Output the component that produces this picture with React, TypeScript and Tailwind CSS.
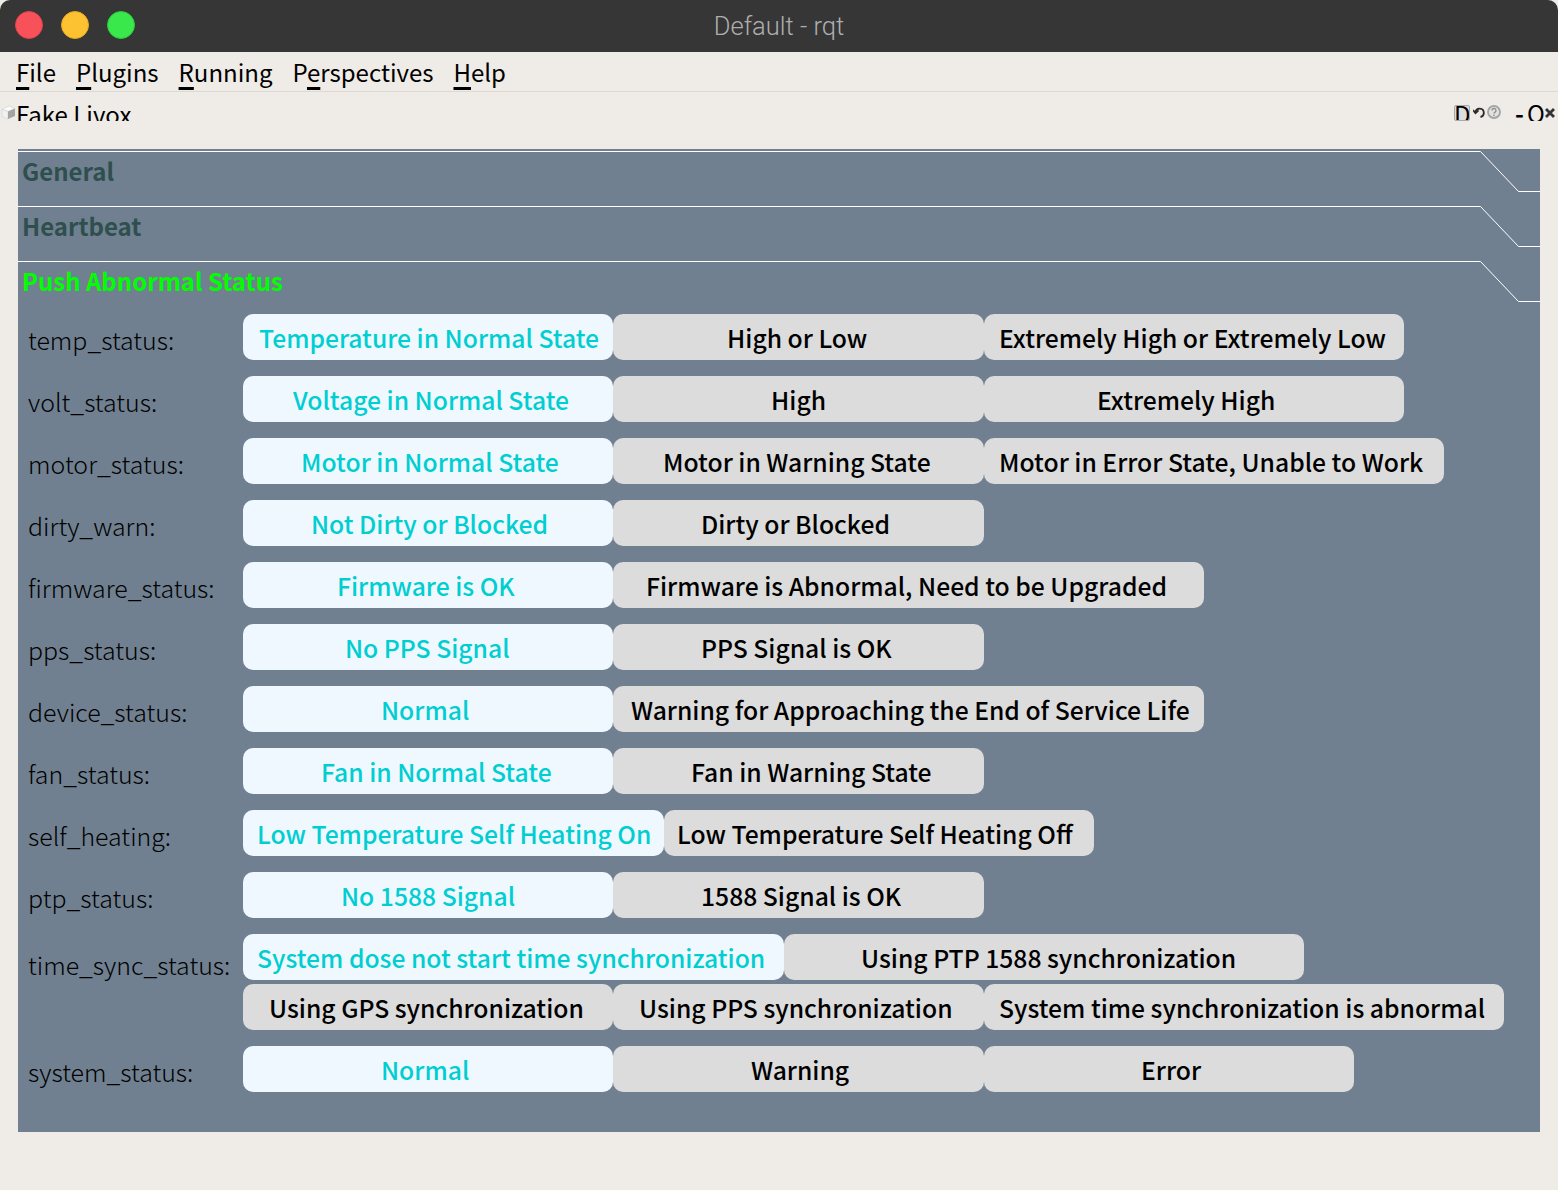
const FONT = "font-['Noto_Sans_CJK_SC','Noto_Sans',sans-serif]";

type Btn = { text: string; w: string; pl: string; on?: boolean };
type Row = { label: string; labelPt?: string; lines: Btn[][] };

const rows: Row[] = [
  { label: "temp_status:", lines: [[
    { text: "Temperature in Normal State", w: "w-[370px]", pl: "pl-[17px]", on: true },
    { text: "High or Low", w: "w-[371px]", pl: "pl-[115px]" },
    { text: "Extremely High or Extremely Low", w: "w-[420px]", pl: "pl-[16px]" },
  ]] },
  { label: "volt_status:", lines: [[
    { text: "Voltage in Normal State", w: "w-[370px]", pl: "pl-[51px]", on: true },
    { text: "High", w: "w-[371px]", pl: "pl-[159px]" },
    { text: "Extremely High", w: "w-[420px]", pl: "pl-[114px]" },
  ]] },
  { label: "motor_status:", lines: [[
    { text: "Motor in Normal State", w: "w-[370px]", pl: "pl-[59px]", on: true },
    { text: "Motor in Warning State", w: "w-[371px]", pl: "pl-[51px]" },
    { text: "Motor in Error State, Unable to Work", w: "w-[460px]", pl: "pl-[16px]" },
  ]] },
  { label: "dirty_warn:", lines: [[
    { text: "Not Dirty or Blocked", w: "w-[370px]", pl: "pl-[69px]", on: true },
    { text: "Dirty or Blocked", w: "w-[371px]", pl: "pl-[89px]" },
  ]] },
  { label: "firmware_status:", lines: [[
    { text: "Firmware is OK", w: "w-[370px]", pl: "pl-[95px]", on: true },
    { text: "Firmware is Abnormal, Need to be Upgraded", w: "w-[591px]", pl: "pl-[34px]" },
  ]] },
  { label: "pps_status:", lines: [[
    { text: "No PPS Signal", w: "w-[370px]", pl: "pl-[103px]", on: true },
    { text: "PPS Signal is OK", w: "w-[371px]", pl: "pl-[89px]" },
  ]] },
  { label: "device_status:", lines: [[
    { text: "Normal", w: "w-[370px]", pl: "pl-[139px]", on: true },
    { text: "Warning for Approaching the End of Service Life", w: "w-[591px]", pl: "pl-[19px]" },
  ]] },
  { label: "fan_status:", lines: [[
    { text: "Fan in Normal State", w: "w-[370px]", pl: "pl-[79px]", on: true },
    { text: "Fan in Warning State", w: "w-[371px]", pl: "pl-[79px]" },
  ]] },
  { label: "self_heating:", lines: [[
    { text: "Low Temperature Self Heating On", w: "w-[421px]", pl: "pl-[15px]", on: true },
    { text: "Low Temperature Self Heating Off", w: "w-[430px]", pl: "pl-[14px]" },
  ]] },
  { label: "ptp_status:", lines: [[
    { text: "No 1588 Signal", w: "w-[370px]", pl: "pl-[99px]", on: true },
    { text: "1588 Signal is OK", w: "w-[371px]", pl: "pl-[89px]" },
  ]] },
  { label: "time_sync_status:", labelPt: "pt-[11px]", lines: [[
    { text: "System dose not start time synchronization", w: "w-[541px]", pl: "pl-[15px]", on: true },
    { text: "Using PTP 1588 synchronization", w: "w-[520px]", pl: "pl-[78px]" },
  ], [
    { text: "Using GPS synchronization", w: "w-[370px]", pl: "pl-[27px]" },
    { text: "Using PPS synchronization", w: "w-[371px]", pl: "pl-[27px]" },
    { text: "System time synchronization is abnormal", w: "w-[520px]", pl: "pl-[16px]" },
  ]] },
  { label: "system_status:", lines: [[
    { text: "Normal", w: "w-[370px]", pl: "pl-[139px]", on: true },
    { text: "Warning", w: "w-[371px]", pl: "pl-[139px]" },
    { text: "Error", w: "w-[370px]", pl: "pl-[158px]" },
  ]] },
];

function Menu({ k, rest, pre = "" }: { k: string; rest: string; pre?: string }) {
  return (
    <span>
      {pre}
      <span className="underline decoration-[3px] underline-offset-[5px] [text-decoration-skip-ink:none]">{k}</span>
      {rest}
    </span>
  );
}

function Section({ title, active }: { title: string; active?: boolean }) {
  return (
    <div className="relative h-[55px] shrink-0">
      <svg className="absolute left-0 top-[2px] w-[1522px] h-[42px]" viewBox="0 0 1522 42" fill="none">
        <path d="M0 .5H1462.5L1500.5 40.5H1522" stroke="#fff" strokeWidth="1" />
      </svg>
      <div className={`pl-[4px] pt-[1px] text-[24px] leading-[42px] font-bold ${active ? "text-[#00ff00]" : "text-[#2f4f4f]"}`}>
        {title}
      </div>
    </div>
  );
}

export default function App() {
  return (
    <div className={`w-[1558px] h-[1190px] bg-[#efebe6] overflow-hidden ${FONT}`}>
      {/* title bar */}
      <div className="relative h-[52px] bg-[#363636] rounded-t-[10px] flex items-center justify-center">
        <div className="absolute left-[15px] top-[11px] flex gap-[18px]">
          <span className="w-[28px] h-[28px] rounded-full bg-[#f8515a] border border-[#e0424c]" />
          <span className="w-[28px] h-[28px] rounded-full bg-[#fdc231] border border-[#e8a820]" />
          <span className="w-[28px] h-[28px] rounded-full bg-[#39e84a] border border-[#2cc93c]" />
        </div>
        <span className="font-['Roboto',sans-serif] text-[25.500px] leading-[30px] text-[#aeaeae] font-light">Default - rqt</span>
      </div>

      {/* menu bar */}
      <div className="h-[40px] pl-[16px] flex items-center gap-[20px] text-[24px] leading-[40px] text-black border-b border-[#dcd8d2]">
        <Menu k="F" rest="ile" />
        <Menu k="P" rest="lugins" />
        <Menu k="R" rest="unning" />
        <Menu pre="P" k="e" rest="rspectives" />
        <Menu k="H" rest="elp" />
      </div>

      {/* dock title, cut off at the bottom like the reference */}
      <div className="h-[29px] overflow-hidden flex items-start text-black">
        <svg className="mt-[13px] ml-[1px] w-[15px] h-[15px] shrink-0" viewBox="0 0 15 15">
          <path d="M1 4.500l7-3.500 6 2.500-7 3z" fill="#fbfbfb" stroke="#d4d4d4" strokeWidth=".7" />
          <path d="M1 4.500l6 2v7.500l-6-2.500z" fill="#f2f2f2" stroke="#d4d4d4" strokeWidth=".7" />
          <path d="M7 6.500l7-3v7.500l-7 3z" fill="#a4a4a4" />
        </svg>
        <span className="text-[24px] leading-[44px]">Fake Livox</span>
        <div className="ml-auto mr-[3px] flex items-start h-[29px] text-[24px]">
          <div className="mt-[13px] w-[16px] h-[16px] bg-[#dcdcdc] border border-[#a9a9a9] rounded-[2px] overflow-hidden leading-[16px]">
            <span className="-ml-[1px] block">D</span>
          </div>
          <svg className="mt-[14px] ml-[3px] w-[12px] h-[13px]" viewBox="0 0 12 13" fill="none" stroke="#2a2a2a" strokeWidth="1.800">
            <path d="M2.500 6a4.200 4.200 0 1 1 5 5" />
            <path d="M0 4l2.500 3.200 3-2.800" />
          </svg>
          <svg className="mt-[13px] ml-[2px] w-[14px] h-[14px]" viewBox="0 0 14 14">
            <circle cx="7" cy="7" r="6" fill="#e2e2e2" stroke="#a4a4a4" strokeWidth="1.800" />
            <path d="M5 5.500a2 2 0 1 1 2.800 1.800c-.6.3-.8.6-.8 1.300M7 9.500v1.500" fill="none" stroke="#8c8c8c" strokeWidth="1.300" />
          </svg>
          <span className="ml-[14px] mt-[6px] w-[8px] leading-[30px] font-bold">-</span>
          <span className="ml-[4px] mt-[6px] w-[16px] leading-[30px]">O</span>
          <svg className="ml-[2px] mt-[16px] w-[10px] h-[10px]" viewBox="0 0 10 10" stroke="#333" strokeWidth="2.800">
            <path d="M1 1l8 8M9 1l-8 8" />
          </svg>
        </div>
      </div>

      {/* panel */}
      <div className="mt-[28px] ml-[18px] w-[1522px] h-[983px] bg-[#708090] flex flex-col">
        <Section title="General" />
        <Section title="Heartbeat" />
        <Section title="Push Abnormal Status" active />
        <div className="flex flex-col gap-[16px]">
          {rows.map((row) => (
            <div key={row.label} className="flex">
              <div className={`w-[225px] pl-[10px] ${row.labelPt ?? "pt-[6px]"} text-[24.900px] leading-[38px] text-black font-light whitespace-nowrap`}>
                {row.label}
              </div>
              <div className="flex flex-col gap-[4px]">
                {row.lines.map((line, i) => (
                  <div key={i} className="flex">
                    {line.map((b) => (
                      <div
                        key={b.text}
                        className={`${b.w} ${b.pl} h-[46px] indent-[-1px] rounded-[10px] text-[24.700px] leading-[46px] font-medium whitespace-nowrap ${
                          b.on ? "bg-[#f0f8ff] text-[#00ced1]" : "bg-[#dcdcdc] text-black"
                        }`}
                      >
                        {b.text}
                      </div>
                    ))}
                  </div>
                ))}
              </div>
            </div>
          ))}
        </div>
      </div>
    </div>
  );
}
